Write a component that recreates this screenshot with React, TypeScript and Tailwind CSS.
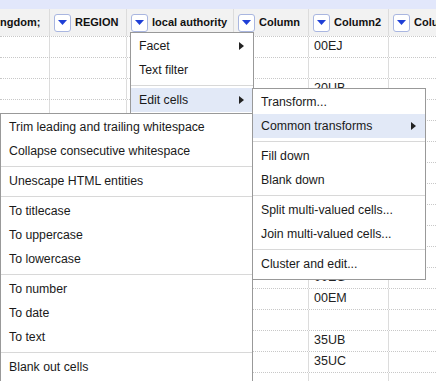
const font = { fontFamily: '"Liberation Sans", Arial, sans-serif' };

const columns = [
  { name: "ngdom;", width: "w-[50px]", button: false },
  { name: "REGION", width: "w-[77px]", button: true },
  { name: "local authority", width: "w-[107px]", button: true },
  { name: "Column", width: "w-[75px]", button: true },
  { name: "Column2", width: "w-[80px]", button: true },
  { name: "Column3", width: "w-[80px]", button: true },
];

const column2Values: Record<number, string> = {
  0: "00EJ",
  2: "20UB",
  11: "00EG",
  12: "00EM",
  14: "35UB",
  15: "35UC",
};

type Entry = { label: string; sub?: boolean; active?: boolean } | "sep";

const columnMenu: Entry[] = [
  { label: "Facet", sub: true },
  { label: "Text filter" },
  "sep",
  { label: "Edit cells", sub: true, active: true },
];

const editCellsMenu: Entry[] = [
  { label: "Transform..." },
  { label: "Common transforms", sub: true, active: true },
  "sep",
  { label: "Fill down" },
  { label: "Blank down" },
  "sep",
  { label: "Split multi-valued cells..." },
  { label: "Join multi-valued cells..." },
  "sep",
  { label: "Cluster and edit..." },
];

const transformsMenu: Entry[] = [
  { label: "Trim leading and trailing whitespace" },
  { label: "Collapse consecutive whitespace" },
  "sep",
  { label: "Unescape HTML entities" },
  "sep",
  { label: "To titlecase" },
  { label: "To uppercase" },
  { label: "To lowercase" },
  "sep",
  { label: "To number" },
  { label: "To date" },
  { label: "To text" },
  "sep",
  { label: "Blank out cells" },
];

function DropButton() {
  return (
    <div className="flex h-[18px] w-[17px] shrink-0 items-center justify-center rounded-[3px] border border-[#a9b6e0] bg-white">
      <svg width="9" height="5" viewBox="0 0 9 5">
        <polygon points="0,0 9,0 4.5,5" fill="#1f3fd6" />
      </svg>
    </div>
  );
}

function Arrow() {
  return (
    <svg width="5" height="8" viewBox="0 0 5 8" className="ml-auto">
      <polygon points="0,0 5,4 0,8" fill="#222" />
    </svg>
  );
}

function Menu({ items, className }: { items: Entry[]; className: string }) {
  return (
    <div className={`absolute border border-[#999] bg-white pt-[1px] text-[12.3px] text-[#1a1a1a] ${className}`}>
      {items.map((item, i) =>
        item === "sep" ? (
          <div key={i} className="mt-[3px] mb-[2px] h-px bg-[#d8d8d8]" />
        ) : (
          <div
            key={i}
            className={`flex h-[24px] items-center pl-[8px] pr-[9px] ${item.active ? "bg-[#e2e9f7]" : ""}`}
          >
            <span className="whitespace-nowrap">{item.label}</span>
            {item.sub && <Arrow />}
          </div>
        )
      )}
    </div>
  );
}

export default function App() {
  const rows = Array.from({ length: 17 }, (_, i) => i);
  return (
    <div className="relative h-[381px] w-[436px] overflow-hidden bg-white" style={font}>
      <div className="h-[9px] bg-[#e2e7fb]" />
      {/* header */}
      <div className="flex h-[27px] bg-[#f2f2f2]">
        {columns.map((c, i) => (
          <div
            key={i}
            className={`flex shrink-0 items-center gap-[4px] overflow-hidden border-r border-[#dcdcdc] text-[11px] font-bold text-[#111] ${c.width} ${i === 0 ? "pl-0" : "pl-[4px]"}`}
          >
            {c.button && <DropButton />}
            <span className="whitespace-nowrap">{c.name}</span>
          </div>
        ))}
      </div>
      {/* body */}
      {rows.map((r) => (
        <div key={r} className="flex h-[21px] border-t border-dotted border-[#c8c8c8]">
          {columns.map((c, i) => (
            <div
              key={i}
              className={`shrink-0 border-r border-[#dcdcdc] pl-[5px] text-[12.5px] text-[#222] ${c.width}`}
            >
              {i === 4 ? column2Values[r] ?? "" : ""}
            </div>
          ))}
        </div>
      ))}

      <Menu items={columnMenu} className="left-[130px] top-[32px] w-[124px] pb-[2px]" />
      <Menu items={editCellsMenu} className="left-[252px] top-[88px] w-[174px] pb-[3px]" />
      <Menu items={transformsMenu} className="left-0 top-[113px] w-[253px] pb-[4px]" />
    </div>
  );
}
